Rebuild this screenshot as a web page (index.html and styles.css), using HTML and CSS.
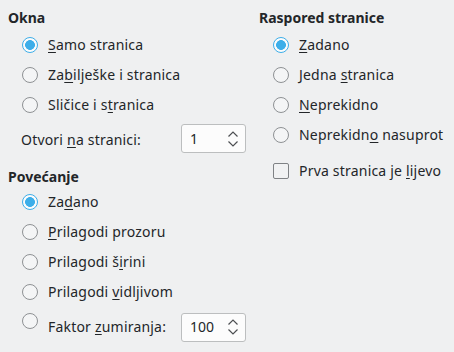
FILE: index.html
```html
<!DOCTYPE html>
<html>
<head>
<meta charset="utf-8">
<link rel="stylesheet" href="styles.css">
</head>
<body>
<div class="page">
  <div class="col col-left">
    <div class="title">Okna</div>
    <div class="row"><span class="radio checked"></span><span class="label"><u>S</u>amo stranica</span></div>
    <div class="row"><span class="radio"></span><span class="label">Za<u>b</u>ilješke i stranica</span></div>
    <div class="row"><span class="radio"></span><span class="label">Sličice i s<u>t</u>ranica</span></div>
    <div class="spinrow">
      <span class="spinlabel">Otvori <u>n</u>a stranici:</span>
      <div class="spin"><span class="val">1</span>
        <svg class="arrows" width="12" height="18" viewBox="0 0 12 18"><path d="M1.5 6.5 L6 2 L10.5 6.5" fill="none" stroke="#4d4f52" stroke-width="1.2"/><path d="M1.5 11.5 L6 16 L10.5 11.5" fill="none" stroke="#4d4f52" stroke-width="1.2"/></svg>
      </div>
    </div>
    <div class="title title2">Povećanje</div>
    <div class="row"><span class="radio checked"></span><span class="label">Za<u>d</u>ano</span></div>
    <div class="row"><span class="radio"></span><span class="label"><u>P</u>rilagodi prozoru</span></div>
    <div class="row"><span class="radio"></span><span class="label">Prilagodi š<u>i</u>rini</span></div>
    <div class="row"><span class="radio"></span><span class="label">Prilagodi <u>v</u>idljivom</span></div>
    <div class="spinrow spinrow2">
      <span class="radio top"></span>
      <span class="spinlabel2">Faktor <u>z</u>umiranja:</span>
      <div class="spin"><span class="val">100</span>
        <svg class="arrows" width="12" height="18" viewBox="0 0 12 18"><path d="M1.5 6.5 L6 2 L10.5 6.5" fill="none" stroke="#4d4f52" stroke-width="1.2"/><path d="M1.5 11.5 L6 16 L10.5 11.5" fill="none" stroke="#4d4f52" stroke-width="1.2"/></svg>
      </div>
    </div>
  </div>
  <div class="col col-right">
    <div class="title">Raspored stranice</div>
    <div class="row"><span class="radio checked"></span><span class="label"><u>Z</u>adano</span></div>
    <div class="row"><span class="radio"></span><span class="label">Jedna <u>s</u>tranica</span></div>
    <div class="row"><span class="radio"></span><span class="label"><u>N</u>eprekidno</span></div>
    <div class="row"><span class="radio"></span><span class="label">Neprekidn<u>o</u> nasuprot</span></div>
    <div class="row checkrow"><span class="check"></span><span class="label">Prva stranica je <u>l</u>ijevo</span></div>
  </div>
</div>
</body>
</html>
```
FILE: styles.css
```css
html, body {
  margin: 0;
  padding: 0;
  background: #eff0f1;
}
body {
  font-family: "Noto Sans", "Open Sans", sans-serif;
  font-size: 14px;
  color: #232629;
  width: 454px;
  height: 352px;
  overflow: hidden;
}
.page {
  display: flex;
  padding: 8px 0 0 8px;
}
.col {
  display: flex;
  flex-direction: column;
}
.col-left {
  width: 251px;
}
.title {
  font-weight: bold;
  line-height: 20px;
  height: 20px;
  margin-bottom: 2px;
}
.title2 {
  margin-top: 10px;
  margin-bottom: 0;
}
.row {
  display: flex;
  align-items: center;
  height: 30px;
  line-height: 30px;
  padding-left: 14px;
}
.label, .spinlabel, .spinlabel2 {
  letter-spacing: 0.2px;
  white-space: nowrap;
}
.label {
  margin-left: 10px;
}
u {
  text-decoration: underline;
  text-underline-offset: 2px;
  text-decoration-thickness: 1px;
}
.radio {
  box-sizing: border-box;
  width: 16px;
  height: 16px;
  border-radius: 50%;
  border: 1px solid #8e9194;
  background: #f4f5f6;
  flex: none;
}
.radio.checked {
  border-color: #3daee9;
  background: radial-gradient(circle, #3daee9 0 4.6px, #fcfcfc 5.2px);
}
.check {
  box-sizing: border-box;
  width: 16px;
  height: 16px;
  border-radius: 2px;
  border: 1px solid #7f8285;
  background: #f1f2f3;
  flex: none;
}
.checkrow {
  margin-top: 6px;
}
.spinrow {
  display: flex;
  align-items: center;
  height: 37px;
  line-height: 20px;
}
.spinlabel {
  width: 160px;
  padding-left: 13px;
  margin-top: 2px;
}
.spinrow2 {
  height: 40px;
  align-items: flex-start;
  padding-left: 14px;
}
.spinrow2 .radio.top {
  margin-top: 5.5px;
}
.spinlabel2 {
  width: 133px;
  margin-left: 10px;
  margin-top: 10px;
}
.spin {
  box-sizing: border-box;
  width: 65px;
  height: 29px;
  background: #fcfcfc;
  border: 1px solid #bcbebf;
  border-radius: 3px;
  display: flex;
  align-items: center;
  justify-content: space-between;
  padding: 0 6px 0 8px;
}
.spinrow2 .spin {
  margin-top: 5.5px;
}
.val {
  line-height: 20px;
}
.arrows {
  display: block;
}
```
